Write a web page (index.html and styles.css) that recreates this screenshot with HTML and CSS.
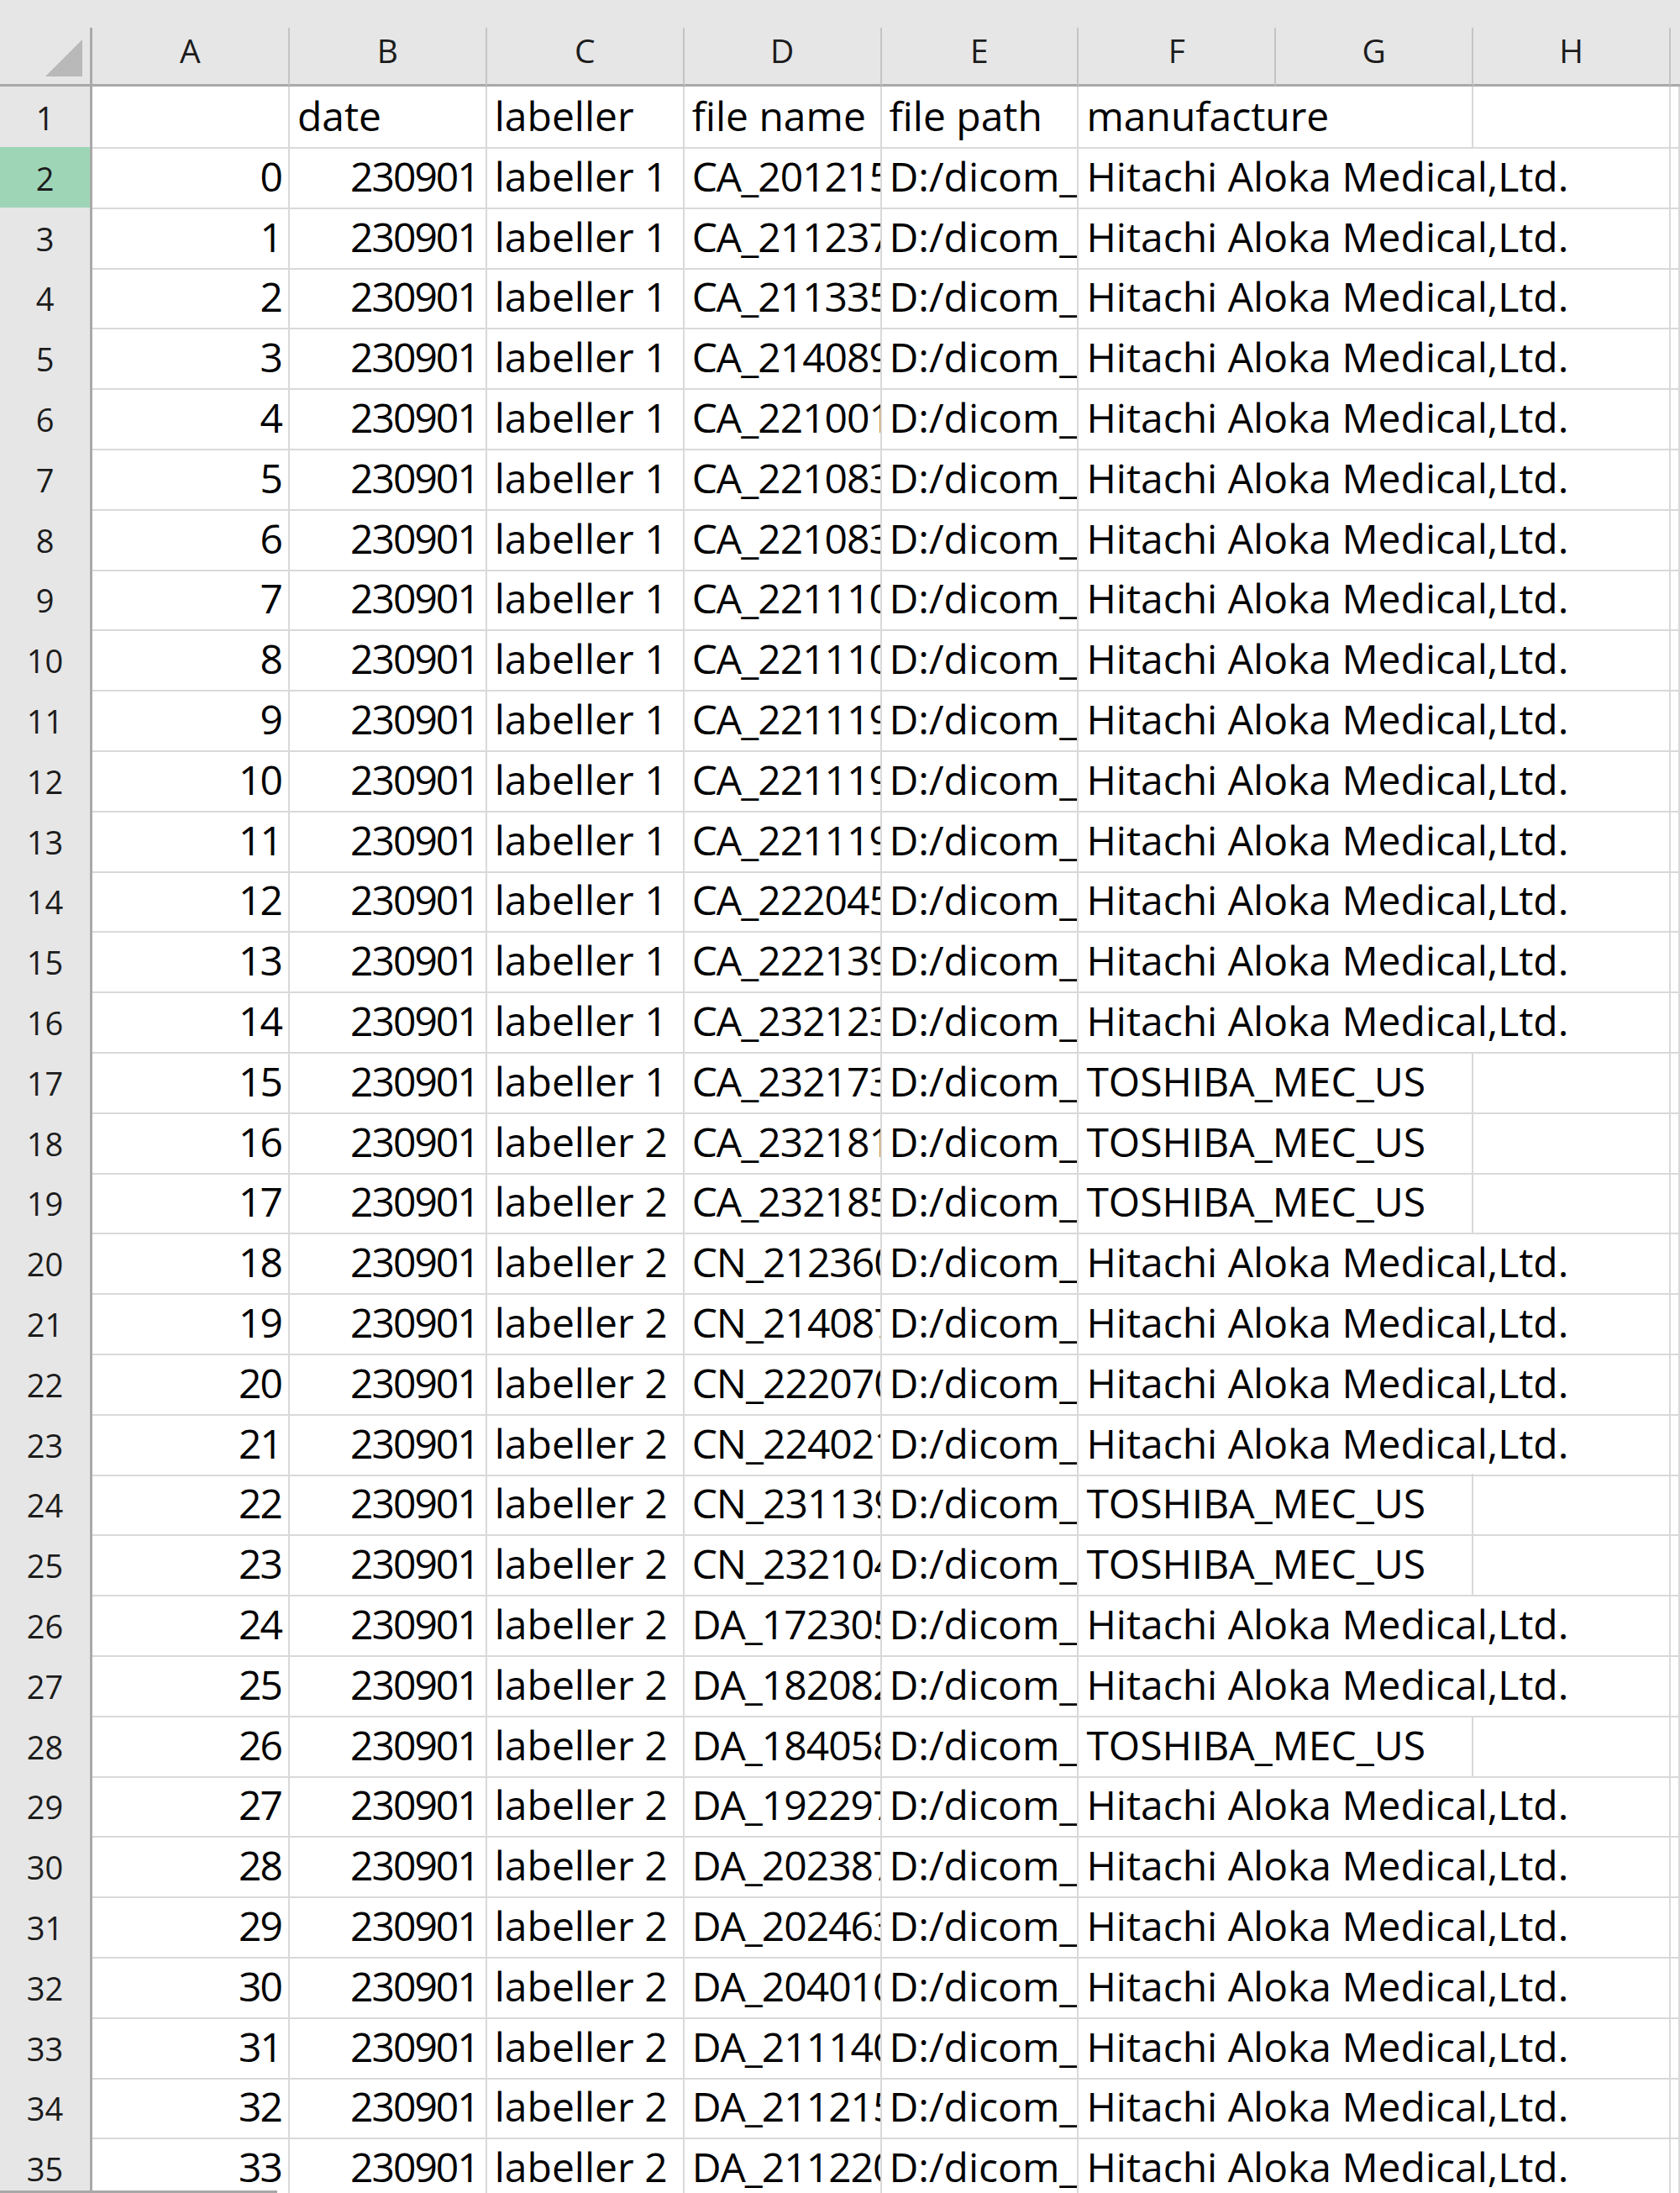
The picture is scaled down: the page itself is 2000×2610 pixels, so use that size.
FILE: index.html
```html
<!DOCTYPE html>
<html lang="en">
<head>
<meta charset="utf-8">
<title>Sheet</title>
<link rel="stylesheet" href="styles.css">
</head>
<body>
<div class="sheet">
  <div class="topstrip"></div>
  <div class="row colhead">
    <div class="corner"><svg class="tri" width="44" height="44" viewBox="0 0 44 44"><polygon points="0,44 44,44 44,0" fill="#b9b9b9"/></svg></div>
    <div class="ch">A</div><div class="ch">B</div><div class="ch">C</div><div class="ch">D</div>
    <div class="ch">E</div><div class="ch">F</div><div class="ch">G</div><div class="ch">H</div><div class="ch last"></div>
  </div>
  <div class="rows">
    <div class="row"><div class="rh">1</div><div class="c"></div><div class="c">date</div><div class="c">labeller</div><div class="c">file name</div><div class="c">file path</div><div class="c span2">manufacture</div><div class="c"></div><div class="c"></div></div>
    <div class="row"><div class="rh sel">2</div><div class="c num">0</div><div class="c num">230901</div><div class="c">labeller 1</div><div class="c fn">CA_201215</div><div class="c">D:/dicom_data</div><div class="c span3">Hitachi Aloka Medical,Ltd.</div><div class="c"></div></div>
    <div class="row"><div class="rh">3</div><div class="c num">1</div><div class="c num">230901</div><div class="c">labeller 1</div><div class="c fn">CA_211237</div><div class="c">D:/dicom_data</div><div class="c span3">Hitachi Aloka Medical,Ltd.</div><div class="c"></div></div>
    <div class="row"><div class="rh">4</div><div class="c num">2</div><div class="c num">230901</div><div class="c">labeller 1</div><div class="c fn">CA_211335</div><div class="c">D:/dicom_data</div><div class="c span3">Hitachi Aloka Medical,Ltd.</div><div class="c"></div></div>
    <div class="row"><div class="rh">5</div><div class="c num">3</div><div class="c num">230901</div><div class="c">labeller 1</div><div class="c fn">CA_214089</div><div class="c">D:/dicom_data</div><div class="c span3">Hitachi Aloka Medical,Ltd.</div><div class="c"></div></div>
    <div class="row"><div class="rh">6</div><div class="c num">4</div><div class="c num">230901</div><div class="c">labeller 1</div><div class="c fn">CA_221001</div><div class="c">D:/dicom_data</div><div class="c span3">Hitachi Aloka Medical,Ltd.</div><div class="c"></div></div>
    <div class="row"><div class="rh">7</div><div class="c num">5</div><div class="c num">230901</div><div class="c">labeller 1</div><div class="c fn">CA_221083</div><div class="c">D:/dicom_data</div><div class="c span3">Hitachi Aloka Medical,Ltd.</div><div class="c"></div></div>
    <div class="row"><div class="rh">8</div><div class="c num">6</div><div class="c num">230901</div><div class="c">labeller 1</div><div class="c fn">CA_221083</div><div class="c">D:/dicom_data</div><div class="c span3">Hitachi Aloka Medical,Ltd.</div><div class="c"></div></div>
    <div class="row"><div class="rh">9</div><div class="c num">7</div><div class="c num">230901</div><div class="c">labeller 1</div><div class="c fn">CA_221110</div><div class="c">D:/dicom_data</div><div class="c span3">Hitachi Aloka Medical,Ltd.</div><div class="c"></div></div>
    <div class="row"><div class="rh">10</div><div class="c num">8</div><div class="c num">230901</div><div class="c">labeller 1</div><div class="c fn">CA_221110</div><div class="c">D:/dicom_data</div><div class="c span3">Hitachi Aloka Medical,Ltd.</div><div class="c"></div></div>
    <div class="row"><div class="rh">11</div><div class="c num">9</div><div class="c num">230901</div><div class="c">labeller 1</div><div class="c fn">CA_221119</div><div class="c">D:/dicom_data</div><div class="c span3">Hitachi Aloka Medical,Ltd.</div><div class="c"></div></div>
    <div class="row"><div class="rh">12</div><div class="c num">10</div><div class="c num">230901</div><div class="c">labeller 1</div><div class="c fn">CA_221119</div><div class="c">D:/dicom_data</div><div class="c span3">Hitachi Aloka Medical,Ltd.</div><div class="c"></div></div>
    <div class="row"><div class="rh">13</div><div class="c num">11</div><div class="c num">230901</div><div class="c">labeller 1</div><div class="c fn">CA_221119</div><div class="c">D:/dicom_data</div><div class="c span3">Hitachi Aloka Medical,Ltd.</div><div class="c"></div></div>
    <div class="row"><div class="rh">14</div><div class="c num">12</div><div class="c num">230901</div><div class="c">labeller 1</div><div class="c fn">CA_222045</div><div class="c">D:/dicom_data</div><div class="c span3">Hitachi Aloka Medical,Ltd.</div><div class="c"></div></div>
    <div class="row"><div class="rh">15</div><div class="c num">13</div><div class="c num">230901</div><div class="c">labeller 1</div><div class="c fn">CA_222139</div><div class="c">D:/dicom_data</div><div class="c span3">Hitachi Aloka Medical,Ltd.</div><div class="c"></div></div>
    <div class="row"><div class="rh">16</div><div class="c num">14</div><div class="c num">230901</div><div class="c">labeller 1</div><div class="c fn">CA_232123</div><div class="c">D:/dicom_data</div><div class="c span3">Hitachi Aloka Medical,Ltd.</div><div class="c"></div></div>
    <div class="row"><div class="rh">17</div><div class="c num">15</div><div class="c num">230901</div><div class="c">labeller 1</div><div class="c fn">CA_232173</div><div class="c">D:/dicom_data</div><div class="c span2">TOSHIBA_MEC_US</div><div class="c"></div><div class="c"></div></div>
    <div class="row"><div class="rh">18</div><div class="c num">16</div><div class="c num">230901</div><div class="c">labeller 2</div><div class="c fn">CA_232181</div><div class="c">D:/dicom_data</div><div class="c span2">TOSHIBA_MEC_US</div><div class="c"></div><div class="c"></div></div>
    <div class="row"><div class="rh">19</div><div class="c num">17</div><div class="c num">230901</div><div class="c">labeller 2</div><div class="c fn">CA_232185</div><div class="c">D:/dicom_data</div><div class="c span2">TOSHIBA_MEC_US</div><div class="c"></div><div class="c"></div></div>
    <div class="row"><div class="rh">20</div><div class="c num">18</div><div class="c num">230901</div><div class="c">labeller 2</div><div class="c fn">CN_212360</div><div class="c">D:/dicom_data</div><div class="c span3">Hitachi Aloka Medical,Ltd.</div><div class="c"></div></div>
    <div class="row"><div class="rh">21</div><div class="c num">19</div><div class="c num">230901</div><div class="c">labeller 2</div><div class="c fn">CN_214087</div><div class="c">D:/dicom_data</div><div class="c span3">Hitachi Aloka Medical,Ltd.</div><div class="c"></div></div>
    <div class="row"><div class="rh">22</div><div class="c num">20</div><div class="c num">230901</div><div class="c">labeller 2</div><div class="c fn">CN_222070</div><div class="c">D:/dicom_data</div><div class="c span3">Hitachi Aloka Medical,Ltd.</div><div class="c"></div></div>
    <div class="row"><div class="rh">23</div><div class="c num">21</div><div class="c num">230901</div><div class="c">labeller 2</div><div class="c fn">CN_224021</div><div class="c">D:/dicom_data</div><div class="c span3">Hitachi Aloka Medical,Ltd.</div><div class="c"></div></div>
    <div class="row"><div class="rh">24</div><div class="c num">22</div><div class="c num">230901</div><div class="c">labeller 2</div><div class="c fn">CN_231139</div><div class="c">D:/dicom_data</div><div class="c span2">TOSHIBA_MEC_US</div><div class="c"></div><div class="c"></div></div>
    <div class="row"><div class="rh">25</div><div class="c num">23</div><div class="c num">230901</div><div class="c">labeller 2</div><div class="c fn">CN_232104</div><div class="c">D:/dicom_data</div><div class="c span2">TOSHIBA_MEC_US</div><div class="c"></div><div class="c"></div></div>
    <div class="row"><div class="rh">26</div><div class="c num">24</div><div class="c num">230901</div><div class="c">labeller 2</div><div class="c fn">DA_172305</div><div class="c">D:/dicom_data</div><div class="c span3">Hitachi Aloka Medical,Ltd.</div><div class="c"></div></div>
    <div class="row"><div class="rh">27</div><div class="c num">25</div><div class="c num">230901</div><div class="c">labeller 2</div><div class="c fn">DA_182082</div><div class="c">D:/dicom_data</div><div class="c span3">Hitachi Aloka Medical,Ltd.</div><div class="c"></div></div>
    <div class="row"><div class="rh">28</div><div class="c num">26</div><div class="c num">230901</div><div class="c">labeller 2</div><div class="c fn">DA_184058</div><div class="c">D:/dicom_data</div><div class="c span2">TOSHIBA_MEC_US</div><div class="c"></div><div class="c"></div></div>
    <div class="row"><div class="rh">29</div><div class="c num">27</div><div class="c num">230901</div><div class="c">labeller 2</div><div class="c fn">DA_192297</div><div class="c">D:/dicom_data</div><div class="c span3">Hitachi Aloka Medical,Ltd.</div><div class="c"></div></div>
    <div class="row"><div class="rh">30</div><div class="c num">28</div><div class="c num">230901</div><div class="c">labeller 2</div><div class="c fn">DA_202387</div><div class="c">D:/dicom_data</div><div class="c span3">Hitachi Aloka Medical,Ltd.</div><div class="c"></div></div>
    <div class="row"><div class="rh">31</div><div class="c num">29</div><div class="c num">230901</div><div class="c">labeller 2</div><div class="c fn">DA_202463</div><div class="c">D:/dicom_data</div><div class="c span3">Hitachi Aloka Medical,Ltd.</div><div class="c"></div></div>
    <div class="row"><div class="rh">32</div><div class="c num">30</div><div class="c num">230901</div><div class="c">labeller 2</div><div class="c fn">DA_204010</div><div class="c">D:/dicom_data</div><div class="c span3">Hitachi Aloka Medical,Ltd.</div><div class="c"></div></div>
    <div class="row"><div class="rh">33</div><div class="c num">31</div><div class="c num">230901</div><div class="c">labeller 2</div><div class="c fn">DA_211140</div><div class="c">D:/dicom_data</div><div class="c span3">Hitachi Aloka Medical,Ltd.</div><div class="c"></div></div>
    <div class="row"><div class="rh">34</div><div class="c num">32</div><div class="c num">230901</div><div class="c">labeller 2</div><div class="c fn">DA_211215</div><div class="c">D:/dicom_data</div><div class="c span3">Hitachi Aloka Medical,Ltd.</div><div class="c"></div></div>
    <div class="row"><div class="rh">35</div><div class="c num">33</div><div class="c num">230901</div><div class="c">labeller 2</div><div class="c fn">DA_211220</div><div class="c">D:/dicom_data</div><div class="c span3">Hitachi Aloka Medical,Ltd.</div><div class="c"></div></div>
  </div>
</div>
</body>
</html>
```

FILE: styles.css
```css
html, body {
  margin: 0;
  padding: 0;
  background: #ffffff;
}
body {
  width: 2000px;
  height: 2610px;
  overflow: hidden;
  font-family: "Open Sans", "Noto Sans", "Noto Sans CJK KR", sans-serif;
  color: #000;
}
.sheet {
  position: relative;
  display: flex;
  flex-direction: column;
  height: 2610px;
  overflow: hidden;
}
.sheet::after {
  content: "";
  position: absolute;
  left: 0;
  bottom: 0;
  width: 330px;
  height: 3px;
  background: #a8a8a8;
}
.topstrip {
  height: 33px;
  background: #e6e6e6;
  flex: none;
}
.row {
  display: grid;
  grid-template-columns: 110px repeat(8, 234.875px) 1fr;
  height: 71.8px;
  flex: none;
}
.colhead {
  height: 70px;
  background: #e6e6e6;
}
.corner {
  box-sizing: border-box;
  border-right: 3px solid #a9a9a9;
  border-bottom: 3px solid #a9a9a9;
  display: flex;
  align-items: flex-end;
  justify-content: flex-end;
  padding: 0 9px 9px 0;
}
.tri { display: block; }
.ch {
  box-sizing: border-box;
  border-right: 2px solid #c4c4c4;
  border-bottom: 3px solid #a9a9a9;
  font-size: 39px;
  line-height: 54px;
  text-align: center;
  color: #1c1c1c;
}
.ch.last { border-right: none; }
.rows {
  flex: 1;
  overflow: hidden;
}
.rh {
  box-sizing: border-box;
  background: #e6e6e6;
  border-right: 3px solid #a9a9a9;
  border-bottom: 2px solid #c4c4c4;
  font-size: 38px;
  line-height: 70px;
  padding-top: 2px;
  text-align: center;
  color: #1c1c1c;
}
.rh.sel {
  background: #9fd5b7;
}
.c {
  box-sizing: border-box;
  border-right: 2px solid #d9d9d9;
  border-bottom: 2px solid #d9d9d9;
  font-size: 48px;
  line-height: 70px;
  padding: 0 0 0 9px;
  white-space: nowrap;
  overflow: hidden;
}
.c.num {
  text-align: right;
  padding: 0 8px 0 0;
  letter-spacing: -2px;
}
.c.fn {
  letter-spacing: -1px;
}
.span2 { grid-column: span 2; }
.span3 { grid-column: span 3; }
```
